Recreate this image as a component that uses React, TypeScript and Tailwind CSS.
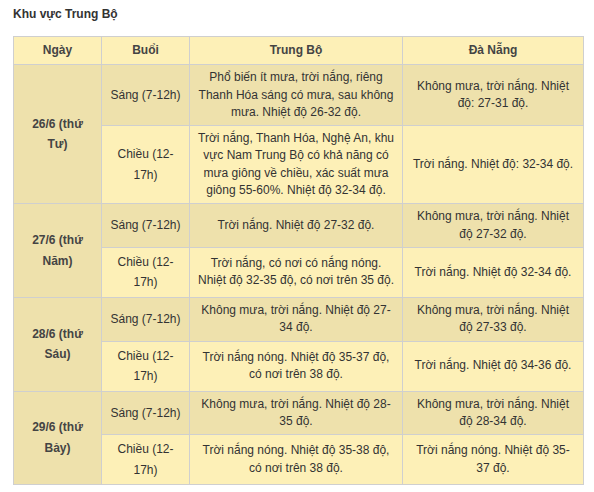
const rows = [
  {
    day: "26/6 (thứ Tư)",
    morning: {
      tb: "Phổ biến ít mưa, trời nắng, riêng Thanh Hóa sáng có mưa, sau không mưa. Nhiệt độ 26-32 độ.",
      dn: "Không mưa, trời nắng. Nhiệt độ: 27-31 độ.",
    },
    afternoon: {
      tb: "Trời nắng, Thanh Hóa, Nghệ An, khu vực Nam Trung Bộ có khả năng có mưa giông về chiều, xác suất mưa giông 55-60%. Nhiệt độ 32-34 độ.",
      dn: "Trời nắng. Nhiệt độ: 32-34 độ.",
    },
  },
  {
    day: "27/6 (thứ Năm)",
    morning: {
      tb: "Trời nắng. Nhiệt độ 27-32 độ.",
      dn: "Không mưa, trời nắng. Nhiệt độ 27-32 độ.",
    },
    afternoon: {
      tb: "Trời nắng, có nơi có nắng nóng. Nhiệt độ 32-35 độ, có nơi trên 35 độ.",
      dn: "Trời nắng. Nhiệt độ 32-34 độ.",
    },
  },
  {
    day: "28/6 (thứ Sáu)",
    morning: {
      tb: "Không mưa, trời nắng. Nhiệt độ 27-34 độ.",
      dn: "Không mưa, trời nắng. Nhiệt độ 27-33 độ.",
    },
    afternoon: {
      tb: "Trời nắng nóng. Nhiệt độ 35-37 độ, có nơi trên 38 độ.",
      dn: "Trời nắng. Nhiệt độ 34-36 độ.",
    },
  },
  {
    day: "29/6 (thứ Bảy)",
    morning: {
      tb: "Không mưa, trời nắng. Nhiệt độ 28-35 độ.",
      dn: "Không mưa, trời nắng. Nhiệt độ 28-34 độ.",
    },
    afternoon: {
      tb: "Trời nắng nóng. Nhiệt độ 35-38 độ, có nơi trên 38 độ.",
      dn: "Trời nắng nóng. Nhiệt độ 35-37 độ.",
    },
  },
];

// first two columns use a taller line, text columns a tighter one
const base = "border border-[#cfcfcf] px-[8px] py-[4px] text-center align-middle";
const wide = base + " leading-[20.5px]";
const text = base + " leading-[17.3px]";
const head = "border border-[#cfcfcf] px-[8px] py-[5px] text-center align-middle leading-[17.3px]";

export default function App() {
  return (
    <div className="bg-white px-[13px] pt-[6px] pb-4 text-[12px] leading-[17px] text-[#333] [font-family:'Liberation_Sans',Arial,sans-serif]">
      <h3 className="font-bold text-[#333]">Khu vực Trung Bộ</h3>

      <table className="mt-[13px] w-[570px] table-fixed border-collapse border border-[#cfcfcf]">
        <colgroup>
          <col className="w-[88px]" />
          <col className="w-[88px]" />
          <col className="w-[213px]" />
          <col className="w-[181px]" />
        </colgroup>
        <thead>
          <tr className="bg-[#fdf0b7] font-bold text-[#444]">
            <th className={head}>Ngày</th>
            <th className={head}>Buổi</th>
            <th className={head}>Trung Bộ</th>
            <th className={head}>Đà Nẵng</th>
          </tr>
        </thead>
        <tbody>
          {rows.map((r) => (
            <>
              <tr key={r.day + "s"} className="bg-[#eee1ac]">
                <td rowSpan={2} className={wide + " font-bold text-[#444]"}>
                  {r.day}
                </td>
                <td className={wide}>Sáng (7-12h)</td>
                <td className={text}>{r.morning.tb}</td>
                <td className={text}>{r.morning.dn}</td>
              </tr>
              <tr key={r.day + "c"} className="bg-[#fdf0b7]">
                <td className={wide}>Chiều (12-17h)</td>
                <td className={text}>{r.afternoon.tb}</td>
                <td className={text}>{r.afternoon.dn}</td>
              </tr>
            </>
          ))}
        </tbody>
      </table>
    </div>
  );
}
